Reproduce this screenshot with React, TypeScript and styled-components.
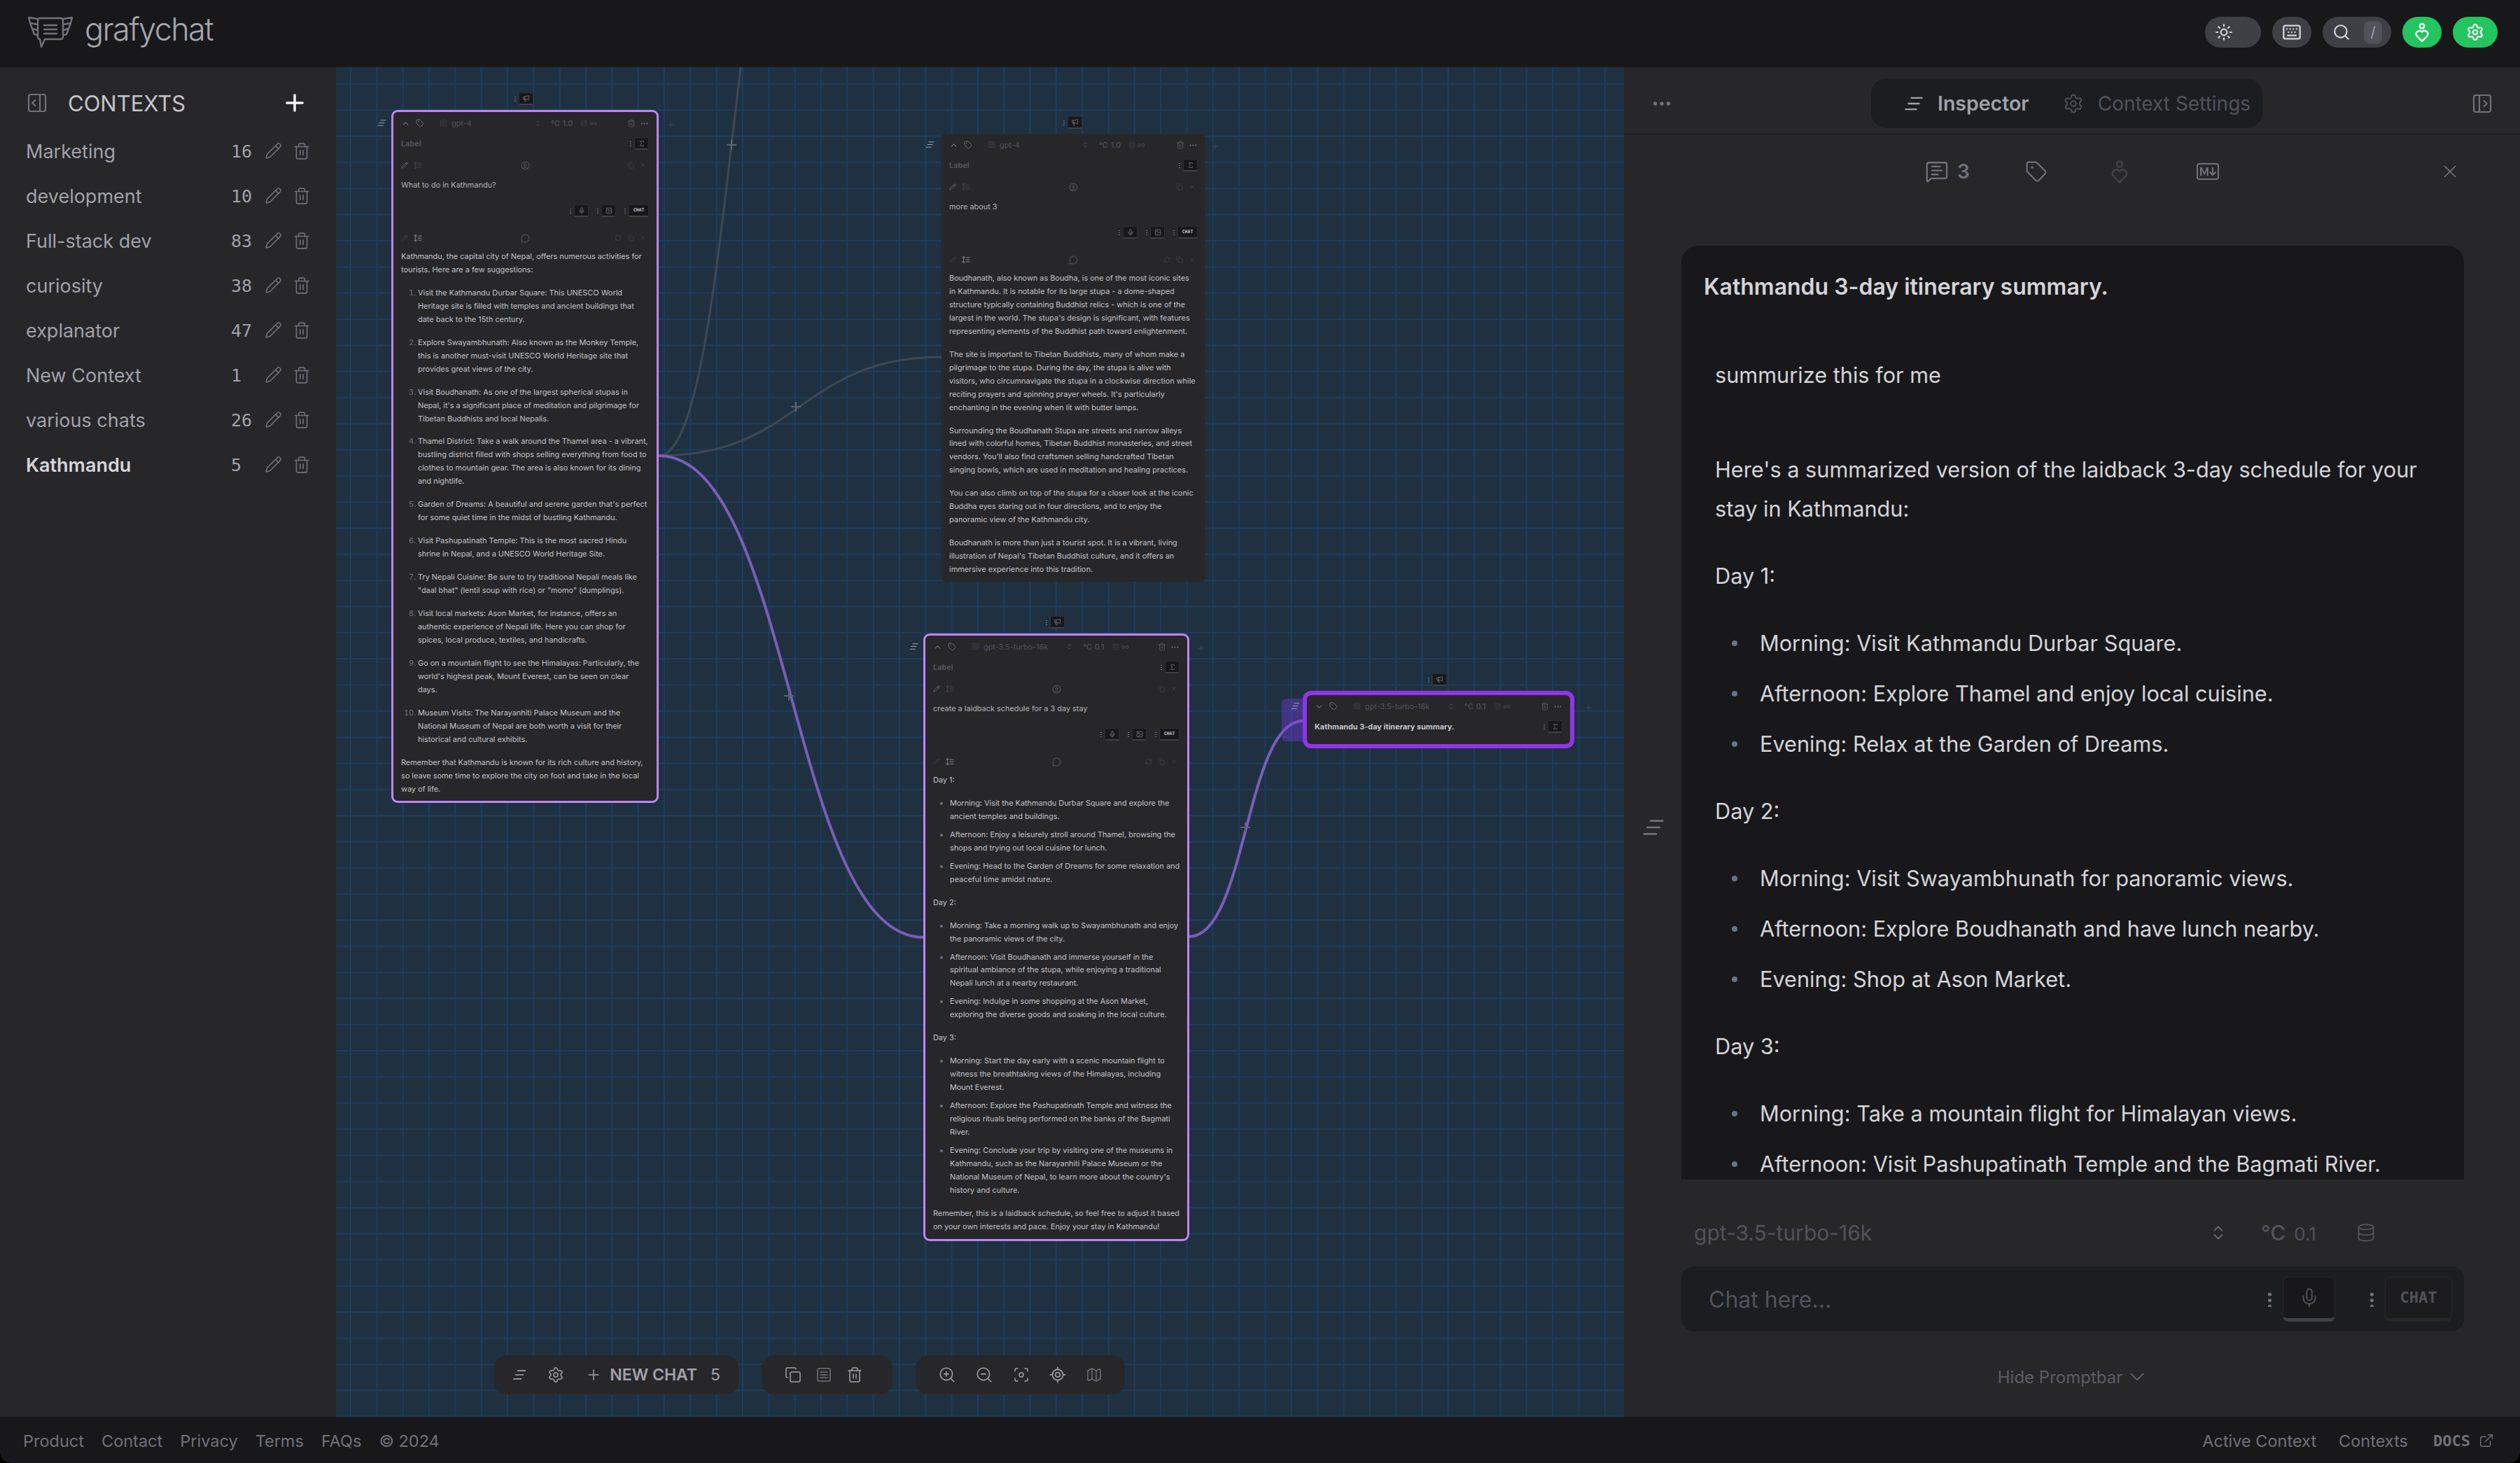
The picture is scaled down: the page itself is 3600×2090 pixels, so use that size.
import React from 'react';
import styled, { createGlobalStyle } from 'styled-components';
import {
  ChevronDown, ChevronUp, ChevronsUpDown, CircleUser, Copy, Database, ExternalLink, Focus,
  Image as ImageIcon, Infinity as InfinityIcon, Keyboard, LocateFixed, Map as MapIcon, Megaphone,
  MessageCircle, MessageSquareText, Mic, MoreHorizontal, PanelLeftOpen, PanelRightOpen, Pencil, Plus,
  RefreshCw, Search, Settings, Sigma, SquareMenu, Sun, Tag, Trash2, X, ZoomIn, ZoomOut,
} from 'lucide-react';
import { BsMarkdown } from 'react-icons/bs';

const GlobalStyle = createGlobalStyle`
  html, body { margin: 0; padding: 0; background: #000; }
  body { font-family: 'Inter', sans-serif; }
  * { box-sizing: border-box; }
  p, ul, ol { margin: 0; padding: 0; }
`;

const Page = styled.div`
  width: 3600px;
  height: 2090px;
  display: flex;
  flex-direction: column;
  background: #18181b;
  border-radius: 0 0 16px 16px;
  overflow: hidden;
`;

const Header = styled.header`
  height: 96px;
  flex: none;
  display: flex;
  align-items: center;
  justify-content: space-between;
  padding: 0 32px 4px 40px;
`;

const Brand = styled.div`
  display: flex;
  align-items: center;
  gap: 17px;
`;

const BrandName = styled.span`
  font-size: 45px;
  font-weight: 300;
  letter-spacing: -1.6px;
  color: #a6a6ac;
  line-height: 52px;
  margin-top: -8px;
`;

const HeaderActions = styled.div`
  display: flex;
  align-items: center;
  gap: 16px;
`;

const Pill = styled.div<{ $w: number; $green?: boolean }>`
  width: ${(p) => p.$w}px;
  height: 44px;
  border-radius: 22px;
  display: flex;
  align-items: center;
  justify-content: ${(p) => (p.$w > 60 ? 'flex-start' : 'center')};
  padding: ${(p) => (p.$w > 60 && !p.$green ? '0 14px' : '0')};
  background: ${(p) => (p.$green ? '#22c55e' : '#3f3f46')};
  color: ${(p) => (p.$green ? '#fff' : '#d4d4d8')};
  ${(p) => p.$green && p.$w > 60 && 'justify-content: center;'}
`;

const SlashKey = styled.span`
  margin-left: auto;
  width: 26px;
  height: 32px;
  margin-right: -1px;
  border-radius: 8px;
  background: #52525b;
  color: #a1a1aa;
  font-size: 20px;
  display: flex;
  align-items: center;
  justify-content: center;
`;

const Main = styled.main`
  flex: 1;
  min-height: 0;
  display: flex;
`;

const Sidebar = styled.aside`
  width: 480px;
  flex: none;
  background: #27272a;
  padding: 19px 36px 0 37px;
`;

const SidebarHead = styled.div`
  height: 64px;
  margin-bottom: 5px;
  display: flex;
  align-items: center;
  color: #71717a;
`;

const SidebarTitle = styled.h2`
  margin: 0 0 0 28px;
  flex: 1;
  font-size: 31px;
  font-weight: 400;
  color: #c4c4c8;
`;

const ContextRow = styled.div<{ $active?: boolean }>`
  height: 64px;
  display: flex;
  align-items: center;
  color: ${(p) => (p.$active ? '#d4d4d8' : '#a1a1aa')};
  font-size: 27px;
  font-weight: ${(p) => (p.$active ? 600 : 400)};
`;

const ContextName = styled.span`
  flex: 1;
`;

const ContextCount = styled.span`
  width: 36px;
  font-family: 'DejaVu Sans Mono', monospace;
  font-size: 25px;
  font-weight: 400;
  color: #a1a1aa;
  text-align: left;
`;

const RowIcons = styled.span`
  display: flex;
  gap: 15px;
  margin-left: 12px;
  color: #71717a;
`;

const Canvas = styled.section`
  flex: 1;
  position: relative;
  overflow: hidden;
  background-color: #1f3140;
  background-image:
    linear-gradient(to right, #1d3d5e 2px, transparent 2px),
    linear-gradient(to bottom, #1d3d5e 2px, transparent 2px);
  background-size: 37.33px 37.33px;
  background-position: 20px 23px;
`;

const Edges = styled.svg`
  position: absolute;
  inset: 0;
  width: 100%;
  height: 100%;
`;

const ChatNode = styled.article<{ $x: number; $y: number; $w: number; $border: number; $color: string }>`
  position: absolute;
  left: ${(p) => p.$x}px;
  top: ${(p) => p.$y}px;
  width: ${(p) => p.$w}px;
  padding: 4px 11px 8px;
  background: #27272a;
  border: ${(p) => p.$border}px solid ${(p) => p.$color};
  border-radius: ${(p) => 6 + p.$border}px;
  font-size: 10.9px;
  line-height: 18.95px;
  color: #c4c4c8;
`;

const NodeFloat = styled.div<{ $left: number; $top: number }>`
  position: absolute;
  left: ${(p) => p.$left}px;
  top: ${(p) => p.$top}px;
  display: flex;
  align-items: center;
  gap: 4px;
  color: #a1a1aa;
`;

const NodeGrab = styled.div`
  position: absolute;
  left: -36px;
  top: 5px;
  width: 36px;
  height: 61px;
  border-radius: 6px 0 0 6px;
  background: rgba(124, 58, 237, 0.38);
`;

const NodeHead = styled.div`
  height: 24px;
  display: flex;
  align-items: center;
  color: #52525b;
`;

const HeadLeft = styled.div`
  width: 55px;
  display: flex;
  align-items: center;
  gap: 8px;
  color: #71717a;
`;

const ModelName = styled.div`
  width: 135px;
  display: flex;
  align-items: center;
  gap: 6px;
  font-size: 10.9px;
  white-space: nowrap;
`;

const HeadTemp = styled.div`
  display: flex;
  align-items: center;
  gap: 4px;
  margin-left: 14px;
  width: 42px;
  font-weight: 500;
`;

const HeadTools = styled.div`
  display: flex;
  align-items: center;
  gap: 3px;
`;

const HeadEnd = styled.div`
  margin-left: auto;
  display: flex;
  align-items: center;
  gap: 6px;
`;

const NodeLabelRow = styled.div`
  height: 34px;
  display: flex;
  align-items: center;
  justify-content: space-between;
`;

const NodeLabel = styled.span<{ $filled?: boolean }>`
  font-weight: 700;
  font-size: 10.9px;
  color: ${(p) => (p.$filled ? '#c4c4c8' : '#52525b')};
`;

const TinyButtonWrap = styled.div`
  display: flex;
  align-items: center;
  gap: 4px;
`;

const TinyDots = styled.span`
  width: 2px;
  height: 8px;
  background-image: radial-gradient(circle, #71717a 1px, transparent 1px);
  background-size: 2px 3px;
`;

const TinyButton = styled.div<{ $w?: number }>`
  width: ${(p) => p.$w ?? 21}px;
  height: 18px;
  display: flex;
  align-items: center;
  justify-content: center;
  background: #18181b;
  border: 1px solid #2e2e33;
  border-bottom: 2px solid #3f3f46;
  border-radius: 2px;
  color: #71717a;
  font-family: 'DejaVu Sans Mono', monospace;
  font-size: 6.5px;
  font-weight: 700;
`;

const ChatText = styled(TinyButton)`
  color: #c4c4c8;
`;

const ToolRow = styled.div<{ $gapTop?: number }>`
  height: 28px;
  margin-top: ${(p) => p.$gapTop ?? 0}px;
  display: grid;
  grid-template-columns: 1fr auto 1fr;
  align-items: center;
  color: #3f3f46;
`;

const ToolSide = styled.div<{ $end?: boolean }>`
  display: flex;
  align-items: center;
  gap: 8px;
  justify-content: ${(p) => (p.$end ? 'flex-end' : 'flex-start')};
  padding-right: ${(p) => (p.$end ? '3px' : '0')};
`;

const ToolAccent = styled.span`
  display: flex;
  color: #71717a;
`;

const PromptText = styled.p`
  height: 28px;
  line-height: 28px;
  color: #b4b4b8;
`;

const SendRow = styled.div`
  height: 46px;
  display: flex;
  align-items: center;
  justify-content: flex-end;
  gap: 12px;
`;

const NodeAnswer = styled.div`
  margin-top: 3px;
  margin-right: -2px;
  max-width: 354px;
  & > p { margin-bottom: 14px; }
  & > p:last-child { margin-bottom: 0; }
`;

const AnswerOl = styled.ol`
  padding-left: 24px;
  margin-bottom: 14px;
  & li { margin-bottom: 14px; }
  & li:last-child { margin-bottom: 0; }
  & li::marker { color: #71717a; }
`;

const AnswerUl = styled.ul`
  padding-left: 24px;
  margin-bottom: 14px;
  & li { margin-bottom: 7px; }
  & li:last-child { margin-bottom: 0; }
  & li::marker { color: #64748b; }
`;

const FlowBar = styled.div`
  position: absolute;
  left: 226px;
  bottom: 32px;
  display: flex;
  gap: 33px;
`;

const FlowGroup = styled.div<{ $w: number; $pad: number; $padEnd?: number }>`
  width: ${(p) => p.$w}px;
  height: 56px;
  padding: 0 ${(p) => p.$padEnd ?? p.$pad}px 0 ${(p) => p.$pad}px;
  display: flex;
  align-items: center;
  justify-content: space-between;
  background: #27272a;
  border-radius: 18px;
  color: #a1a1aa;
`;

const NewChat = styled.span`
  display: flex;
  align-items: center;
  gap: 11px;
  font-size: 23px;
  font-weight: 600;
  color: #a1a1aa;
`;

const ChatCount = styled.span`
  font-weight: 400;
  margin-left: 8px;
`;

const Inspector = styled.aside`
  position: relative;
  width: 1280px;
  flex: none;
  display: flex;
  flex-direction: column;
  background: #27272a;
`;

const TabsRow = styled.div`
  height: 96px;
  flex: none;
  display: flex;
  align-items: center;
  justify-content: space-between;
  padding: 8px 38px 0 38px;
  border-bottom: 1px solid #1c1c1f;
  color: #71717a;
`;

const Tabs = styled.div`
  width: 559px;
  height: 71px;
  margin-right: 15px;
  display: flex;
  align-items: center;
  padding-left: 47px;
  background: #1c1d21;
  border-radius: 22px;
`;

const TabItem = styled.span<{ $active?: boolean }>`
  display: flex;
  align-items: center;
  gap: 20px;
  margin-right: 48px;
  font-size: ${(p) => (p.$active ? 28.5 : 28)}px;
  font-weight: ${(p) => (p.$active ? 600 : 400)};
  color: ${(p) => (p.$active ? '#a1a1aa' : '#52525b')};
  white-space: nowrap;
`;

const MetaRow = styled.div`
  height: 106px;
  flex: none;
  display: grid;
  grid-template-columns: 1fr auto 1fr;
  align-items: center;
  padding: 0 88px;
`;

const MetaIcons = styled.div`
  display: flex;
  align-items: center;
  gap: 86px;
  color: #71717a;
  & > :nth-child(2) { margin-left: -7px; }
  & > :nth-child(4) { margin-left: 7px; }
`;

const MetaHeart = styled.span`
  display: flex;
  color: #3f3f46;
`;

const MetaCount = styled.span`
  display: flex;
  align-items: center;
  gap: 12px;
  font-size: 28px;
  font-weight: 600;
`;

const MetaClose = styled.div`
  justify-self: end;
  margin-right: -3px;
  color: #71717a;
  display: flex;
`;

const Message = styled.div`
  height: 1334px;
  flex: none;
  margin: 53px 80px 0 82px;
  padding: 31px 40px 0 32px;
  overflow: hidden;
  background: #18181b;
  border-radius: 24px 24px 0 0;
  color: #d4d4d8;
  font-size: 30.7px;
  line-height: 56px;
`;

const MessageTitle = styled.h3`
  margin: 0 0 70px;
  font-size: 32px;
  font-weight: 600;
  line-height: 56px;
`;

const MessageBody = styled.div`
  padding-left: 16px;
  & > p { margin-bottom: 40px; }
  & > p:first-child { margin-bottom: 79px; }
`;

const MessageList = styled.ul`
  list-style: none;
  padding-left: 64px;
  margin-bottom: 40px;
  & li { position: relative; margin-bottom: 16px; }
  & li:last-child { margin-bottom: 0; }
  & li::before {
    content: '';
    position: absolute;
    left: -40px;
    top: 24px;
    width: 8px;
    height: 8px;
    border-radius: 50%;
    background: #64748b;
  }
`;

const Gutter = styled.div`
  position: absolute;
  left: 26px;
  top: 1070px;
  color: #71717a;
`;

const ModelRow = styled.div`
  height: 48px;
  flex: none;
  margin: 52px 0 24px;
  padding-left: 100px;
  display: flex;
  align-items: center;
  font-size: 30px;
  color: #52525b;
`;

const ModelLabel = styled.span`
  width: 736px;
`;

const TempLabel = styled.span`
  margin-left: 48px;
  width: 136px;
  display: flex;
  align-items: baseline;
  gap: 12px;
  font-size: 26px;
`;

const TempUnit = styled.span`
  font-size: 30px;
  font-weight: 500;
`;

const PromptBox = styled.div`
  height: 93px;
  flex: none;
  margin: 0 80px 0 82px;
  padding: 0 17px 0 39px;
  display: flex;
  align-items: center;
  background: #1c1d21;
  border-radius: 18px;
`;

const Placeholder = styled.span`
  flex: 1;
  margin-top: 2px;
  font-size: 32px;
  color: #52525b;
`;

const KeyWrap = styled.div`
  display: flex;
  align-items: center;
  gap: 16px;
  margin-left: 50px;
  color: #71717a;
`;

const KeyDots = styled.span`
  width: 5px;
  height: 22px;
  background-image: radial-gradient(circle, #71717a 2.5px, transparent 2.5px);
  background-size: 5px 8.5px;
`;

const KeyButton = styled.div<{ $w: number; $dim?: boolean }>`
  width: ${(p) => p.$w}px;
  height: 64px;
  display: flex;
  align-items: center;
  justify-content: center;
  background: ${(p) => (p.$dim ? '#1c1c1f' : '#18181b')};
  border: 1px solid #27272a;
  border-bottom: 5px solid ${(p) => (p.$dim ? '#27272a' : '#3f3f46')};
  border-radius: 8px;
  font-family: 'DejaVu Sans Mono', monospace;
  font-size: 22px;
  font-weight: 700;
  color: #52525b;
`;

const HideBar = styled.div`
  flex: 1;
  display: flex;
  align-items: center;
  justify-content: center;
  gap: 4px;
  padding: 8px 0 0 4px;
  font-size: 24px;
  color: #5c5c64;
`;

const Footer = styled.footer`
  height: 66px;
  flex: none;
  display: flex;
  align-items: center;
  justify-content: space-between;
  padding: 2px 37px 0 33px;
  font-size: 23.5px;
  color: #71717a;
`;

const FooterLinks = styled.nav<{ $gap: number }>`
  display: flex;
  align-items: center;
  gap: ${(p) => p.$gap}px;
`;

const DocsLink = styled.span`
  display: flex;
  align-items: center;
  gap: 12px;
  font-family: 'DejaVu Sans Mono', monospace;
  font-size: 22px;
  font-weight: 700;
  margin-left: 4px;
`;

// staggered lines used in the node gutters and the inspector tab
const Lines = ({ size = 24 }: { size?: number }) => (
  <svg width={size} height={size} viewBox="0 0 24 24" fill="none" stroke="currentColor" strokeWidth="2" strokeLinecap="round">
    <path d="M9 5h13M5.500 12h13M2 19h13" />
  </svg>
);

const HeartFigure = ({ size = 24 }: { size?: number }) => (
  <svg width={size} height={size} viewBox="0 0 24 24" fill="none" stroke="currentColor" strokeWidth="2" strokeLinejoin="round">
    <circle cx="12" cy="4.500" r="2.800" />
    <path d="M12 23l-6.300-6.400a4 4 0 0 1 5.600-5.600l.7.700.7-.7a4 4 0 0 1 5.600 5.600z" />
  </svg>
);

const Logo = () => (
  <svg width="64" height="46" viewBox="0 0 64 46" fill="none" stroke="#71717a" strokeWidth="2.400" strokeLinejoin="round" strokeLinecap="round">
    <path d="M17 3h30a3 3 0 0 1 3 3v24a3 3 0 0 1-3 3H24l-5 11-2-11a3 3 0 0 1-3-3V6a3 3 0 0 1 3-3z" />
    <path d="M23 13h18M23 19h18M23 25h18" />
    <path d="M14 4L1 2l2 8 11 2M3 10l3 8 8 2M6 18l3 8 5 1" />
    <path d="M50 4l13-2-2 8-11 2M61 10l-3 8-8 2M58 18l-3 8-5 1" />
  </svg>
);

const Rows = () => (
  <svg width="12" height="12" viewBox="0 0 24 24" fill="none" stroke="currentColor" strokeWidth="2.500" strokeLinecap="round">
    <path d="M5 3v18M2 6l3-3 3 3M2 18l3 3 3-3M12 6h10M12 12h10M12 18h10" />
  </svg>
);

const CONTEXTS: [string, number][] = [
  ['Marketing', 16], ['development', 10], ['Full-stack dev', 83], ['curiosity', 38],
  ['explanator', 47], ['New Context', 1], ['various chats', 26], ['Kathmandu', 5],
];

interface NodeProps {
  x: number;
  y: number;
  w: number;
  border: number;
  color: string;
  model: string;
  temp: string;
  collapsed?: boolean;
  label?: string;
  prompt?: string;
  children?: React.ReactNode;
}

const FlowNode = ({ x, y, w, border, color, model, temp, collapsed, label, prompt, children }: NodeProps) => (
  <ChatNode $x={x} $y={y} $w={w} $border={border} $color={color}>
    {collapsed && <NodeGrab />}
    <NodeFloat $left={w / 2 - 15 - border} $top={-25 - border}>
      <TinyDots />
      <TinyButton><Megaphone size={11} /></TinyButton>
    </NodeFloat>
    <NodeFloat $left={-23} $top={9}><Lines size={13} /></NodeFloat>
    <NodeFloat $left={w + 8} $top={12}><Plus size={12} color="#3b4a58" /></NodeFloat>
    <NodeHead>
      <HeadLeft>
        {collapsed ? <ChevronDown size={13} /> : <ChevronUp size={13} />}
        <Tag size={12} />
      </HeadLeft>
      <ModelName><SquareMenu size={11} color="#3f3f46" />{model}</ModelName>
      <ChevronsUpDown size={10} />
      <HeadTemp><span>°C</span>{temp}</HeadTemp>
      <HeadTools>
        <Database size={10} color="#3f3f46" />
        <InfinityIcon size={11} />
      </HeadTools>
      <HeadEnd>
        <Trash2 size={12} />
        <MoreHorizontal size={13} color="#71717a" />
      </HeadEnd>
    </NodeHead>
    <NodeLabelRow>
      <NodeLabel $filled={!!label}>{label ?? 'Label'}</NodeLabel>
      <TinyButtonWrap>
        <TinyDots />
        <TinyButton><Sigma size={10} /></TinyButton>
      </TinyButtonWrap>
    </NodeLabelRow>
    {prompt && (
      <>
        <ToolRow>
          <ToolSide><Pencil size={10} color="#71717a" /><Rows /></ToolSide>
          <CircleUser size={13} color="#52525b" />
          <ToolSide $end><Copy size={10} /><X size={10} /></ToolSide>
        </ToolRow>
        <PromptText>{prompt}</PromptText>
        <SendRow>
          <TinyButtonWrap><TinyDots /><TinyButton><Mic size={10} /></TinyButton></TinyButtonWrap>
          <TinyButtonWrap><TinyDots /><TinyButton><ImageIcon size={10} /></TinyButton></TinyButtonWrap>
          <TinyButtonWrap><TinyDots /><ChatText $w={29}>CHAT</ChatText></TinyButtonWrap>
        </SendRow>
        <ToolRow $gapTop={2}>
          <ToolSide><Pencil size={10} color="#3f3f46" /><ToolAccent><Rows /></ToolAccent></ToolSide>
          <MessageCircle size={13} color="#52525b" />
          <ToolSide $end><RefreshCw size={10} /><Copy size={10} /><X size={10} /></ToolSide>
        </ToolRow>
        <NodeAnswer>{children}</NodeAnswer>
      </>
    )}
  </ChatNode>
);

const EDGE_MARKS = [[565, 111], [657, 485], [647, 898], [1299, 1086]];

export default function App() {
  return (
    <Page>
      <GlobalStyle />
      <Header>
        <Brand>
          <Logo />
          <BrandName>grafychat</BrandName>
        </Brand>
        <HeaderActions>
          <Pill $w={80}><Sun size={26} /></Pill>
          <Pill $w={56}><Keyboard size={28} /></Pill>
          <Pill $w={98}><Search size={26} /><SlashKey>/</SlashKey></Pill>
          <Pill $w={56} $green><HeartFigure size={28} /></Pill>
          <Pill $w={64} $green><Settings size={26} /></Pill>
        </HeaderActions>
      </Header>

      <Main>
        <Sidebar>
          <SidebarHead>
            <PanelRightOpen size={32} strokeWidth={1.6} />
            <SidebarTitle>CONTEXTS</SidebarTitle>
            <Plus size={38} color="#f4f4f5" strokeWidth={2.2} style={{ marginRight: 4 }} />
          </SidebarHead>
          {CONTEXTS.map(([name, count]) => (
            <ContextRow key={name} $active={name === 'Kathmandu'}>
              <ContextName>{name}</ContextName>
              <ContextCount>{count}</ContextCount>
              <RowIcons>
                <Pencil size={25} strokeWidth={1.5} />
                <Trash2 size={26} strokeWidth={1.5} />
              </RowIcons>
            </ContextRow>
          ))}
        </Sidebar>

        <Canvas>
          <Edges viewBox="0 0 1840 1928" fill="none">
            <path d="M461 555 C565 555 565 -333 669 -333" stroke="#3e4853" strokeWidth="3" />
            <path d="M461 555 C663 555 663 414 865 414" stroke="#3e4853" strokeWidth="3" />
            <path d="M461 555 C650 555 650 1243 839 1243" stroke="#7a5db8" strokeWidth="4" />
            <path d="M1219 1242 C1300 1242 1300 934 1381 934" stroke="#7a5db8" strokeWidth="4" />
            {EDGE_MARKS.map(([x, y]) => (
              <path key={x} d={`M${x - 7} ${y}h14M${x} ${y - 7}v14`} stroke="#5a6470" strokeWidth="2" />
            ))}
          </Edges>

          <FlowNode x={79} y={61} w={382} border={3} color="#c084fc" model="gpt-4" temp="1.0" prompt="What to do in Kathmandu?">
            <p>Kathmandu, the capital city of Nepal, offers numerous activities for tourists. Here are a few suggestions:</p>
            <AnswerOl>
              <li>Visit the Kathmandu Durbar Square: This UNESCO World Heritage site is filled with temples and ancient buildings that date back to the 15th century.</li>
              <li>Explore Swayambhunath: Also known as the Monkey Temple, this is another must-visit UNESCO World Heritage site that provides great views of the city.</li>
              <li>Visit Boudhanath: As one of the largest spherical stupas in Nepal, it's a significant place of meditation and pilgrimage for Tibetan Buddhists and local Nepalis.</li>
              <li>Thamel District: Take a walk around the Thamel area - a vibrant, bustling district filled with shops selling everything from food to clothes to mountain gear. The area is also known for its dining and nightlife.</li>
              <li>Garden of Dreams: A beautiful and serene garden that's perfect for some quiet time in the midst of bustling Kathmandu.</li>
              <li>Visit Pashupatinath Temple: This is the most sacred Hindu shrine in Nepal, and a UNESCO World Heritage Site.</li>
              <li>Try Nepali Cuisine: Be sure to try traditional Nepali meals like "daal bhat" (lentil soup with rice) or "momo" (dumplings).</li>
              <li>Visit local markets: Ason Market, for instance, offers an authentic experience of Nepali life. Here you can shop for spices, local produce, textiles, and handicrafts.</li>
              <li>Go on a mountain flight to see the Himalayas: Particularly, the world's highest peak, Mount Everest, can be seen on clear days.</li>
              <li>Museum Visits: The Narayanhiti Palace Museum and the National Museum of Nepal are both worth a visit for their historical and cultural exhibits.</li>
            </AnswerOl>
            <p>Remember that Kathmandu is known for its rich culture and history, so leave some time to explore the city on foot and take in the local way of life.</p>
          </FlowNode>

          <FlowNode x={865} y={95} w={377} border={0} color="transparent" model="gpt-4" temp="1.0" prompt="more about 3">
            <p>Boudhanath, also known as Boudha, is one of the most iconic sites in Kathmandu. It is notable for its large stupa - a dome-shaped structure typically containing Buddhist relics - which is one of the largest in the world. The stupa's design is significant, with features representing elements of the Buddhist path toward enlightenment.</p>
            <p>The site is important to Tibetan Buddhists, many of whom make a pilgrimage to the stupa. During the day, the stupa is alive with visitors, who circumnavigate the stupa in a clockwise direction while reciting prayers and spinning prayer wheels. It's particularly enchanting in the evening when lit with butter lamps.</p>
            <p>Surrounding the Boudhanath Stupa are streets and narrow alleys lined with colorful homes, Tibetan Buddhist monasteries, and street vendors. You'll also find craftsmen selling handcrafted Tibetan singing bowls, which are used in meditation and healing practices.</p>
            <p>You can also climb on top of the stupa for a closer look at the iconic Buddha eyes staring out in four directions, and to enjoy the panoramic view of the Kathmandu city.</p>
            <p>Boudhanath is more than just a tourist spot. It is a vibrant, living illustration of Nepal's Tibetan Buddhist culture, and it offers an immersive experience into this tradition.</p>
          </FlowNode>

          <FlowNode x={839} y={809} w={380} border={3} color="#c084fc" model="gpt-3.5-turbo-16k" temp="0.1" prompt="create a laidback schedule for a 3 day stay">
            <p>Day 1:</p>
            <AnswerUl>
              <li>Morning: Visit the Kathmandu Durbar Square and explore the ancient temples and buildings.</li>
              <li>Afternoon: Enjoy a leisurely stroll around Thamel, browsing the shops and trying out local cuisine for lunch.</li>
              <li>Evening: Head to the Garden of Dreams for some relaxation and peaceful time amidst nature.</li>
            </AnswerUl>
            <p>Day 2:</p>
            <AnswerUl>
              <li>Morning: Take a morning walk up to Swayambhunath and enjoy the panoramic views of the city.</li>
              <li>Afternoon: Visit Boudhanath and immerse yourself in the spiritual ambiance of the stupa, while enjoying a traditional Nepali lunch at a nearby restaurant.</li>
              <li>Evening: Indulge in some shopping at the Ason Market, exploring the diverse goods and soaking in the local culture.</li>
            </AnswerUl>
            <p>Day 3:</p>
            <AnswerUl>
              <li>Morning: Start the day early with a scenic mountain flight to witness the breathtaking views of the Himalayas, including Mount Everest.</li>
              <li>Afternoon: Explore the Pashupatinath Temple and witness the religious rituals being performed on the banks of the Bagmati River.</li>
              <li>Evening: Conclude your trip by visiting one of the museums in Kathmandu, such as the Narayanhiti Palace Museum or the National Museum of Nepal, to learn more about the country's history and culture.</li>
            </AnswerUl>
            <p>Remember, this is a laidback schedule, so feel free to adjust it based on your own interests and pace. Enjoy your stay in Kathmandu!</p>
          </FlowNode>

          <FlowNode x={1381} y={891} w={388} border={6} color="#9333ea" model="gpt-3.5-turbo-16k" temp="0.1" collapsed label="Kathmandu 3-day itinerary summary." />

          <FlowBar>
            <FlowGroup $w={349} $pad={26}>
              <Lines size={20} />
              <Settings size={24} strokeWidth={1.5} />
              <NewChat><Plus size={24} strokeWidth={1.5} />NEW CHAT<ChatCount>5</ChatCount></NewChat>
            </FlowGroup>
            <FlowGroup $w={187} $pad={33} $padEnd={42}>
              <Copy size={24} strokeWidth={1.5} />
              <SquareMenu size={24} strokeWidth={1.5} color="#71717a" />
              <Trash2 size={24} strokeWidth={1.5} />
            </FlowGroup>
            <FlowGroup $w={299} $pad={32}>
              <ZoomIn size={26} strokeWidth={1.5} />
              <ZoomOut size={26} strokeWidth={1.5} />
              <Focus size={24} strokeWidth={1.5} />
              <LocateFixed size={26} strokeWidth={1.5} />
              <MapIcon size={24} strokeWidth={1.5} color="#71717a" />
            </FlowGroup>
          </FlowBar>
        </Canvas>

        <Inspector>
          <Gutter><Lines size={32} /></Gutter>
          <TabsRow>
            <MoreHorizontal size={32} />
            <Tabs>
              <TabItem $active><Lines size={28} />Inspector</TabItem>
              <TabItem><Settings size={30} strokeWidth={1.5} />Context Settings</TabItem>
            </Tabs>
            <PanelLeftOpen size={32} strokeWidth={1.6} />
          </TabsRow>
          <MetaRow>
            <span />
            <MetaIcons>
              <MetaCount><MessageSquareText size={34} strokeWidth={1.6} />3</MetaCount>
              <Tag size={32} strokeWidth={1.6} />
              <MetaHeart><HeartFigure size={34} /></MetaHeart>
              <BsMarkdown size={32} />
            </MetaIcons>
            <MetaClose><X size={30} strokeWidth={1.4} /></MetaClose>
          </MetaRow>
          <Message>
            <MessageTitle>Kathmandu 3-day itinerary summary.</MessageTitle>
            <MessageBody>
              <p>summurize this for me</p>
              <p>Here's a summarized version of the laidback 3-day schedule for your stay in Kathmandu:</p>
              <p>Day 1:</p>
              <MessageList>
                <li>Morning: Visit Kathmandu Durbar Square.</li>
                <li>Afternoon: Explore Thamel and enjoy local cuisine.</li>
                <li>Evening: Relax at the Garden of Dreams.</li>
              </MessageList>
              <p>Day 2:</p>
              <MessageList>
                <li>Morning: Visit Swayambhunath for panoramic views.</li>
                <li>Afternoon: Explore Boudhanath and have lunch nearby.</li>
                <li>Evening: Shop at Ason Market.</li>
              </MessageList>
              <p>Day 3:</p>
              <MessageList>
                <li>Morning: Take a mountain flight for Himalayan views.</li>
                <li>Afternoon: Visit Pashupatinath Temple and the Bagmati River.</li>
              </MessageList>
            </MessageBody>
          </Message>
          <ModelRow>
            <ModelLabel>gpt-3.5-turbo-16k</ModelLabel>
            <ChevronsUpDown size={26} strokeWidth={1.6} color="#71717a" />
            <TempLabel><TempUnit>°C</TempUnit>0.1</TempLabel>
            <Database size={28} strokeWidth={1.6} />
          </ModelRow>
          <PromptBox>
            <Placeholder>Chat here...</Placeholder>
            <KeyWrap>
              <KeyDots />
              <KeyButton $w={75}><Mic size={30} strokeWidth={1.5} /></KeyButton>
            </KeyWrap>
            <KeyWrap>
              <KeyDots />
              <KeyButton $w={96} $dim>CHAT</KeyButton>
            </KeyWrap>
          </PromptBox>
          <HideBar>Hide Promptbar <ChevronDown size={34} strokeWidth={1.5} /></HideBar>
        </Inspector>
      </Main>

      <Footer>
        <FooterLinks $gap={25}>
          <span>Product</span>
          <span>Contact</span>
          <span>Privacy</span>
          <span>Terms</span>
          <span>FAQs</span>
          <span>© 2024</span>
        </FooterLinks>
        <FooterLinks $gap={32}>
          <span>Active Context</span>
          <span>Contexts</span>
          <DocsLink>DOCS <ExternalLink size={22} strokeWidth={1.5} /></DocsLink>
        </FooterLinks>
      </Footer>
    </Page>
  );
}
